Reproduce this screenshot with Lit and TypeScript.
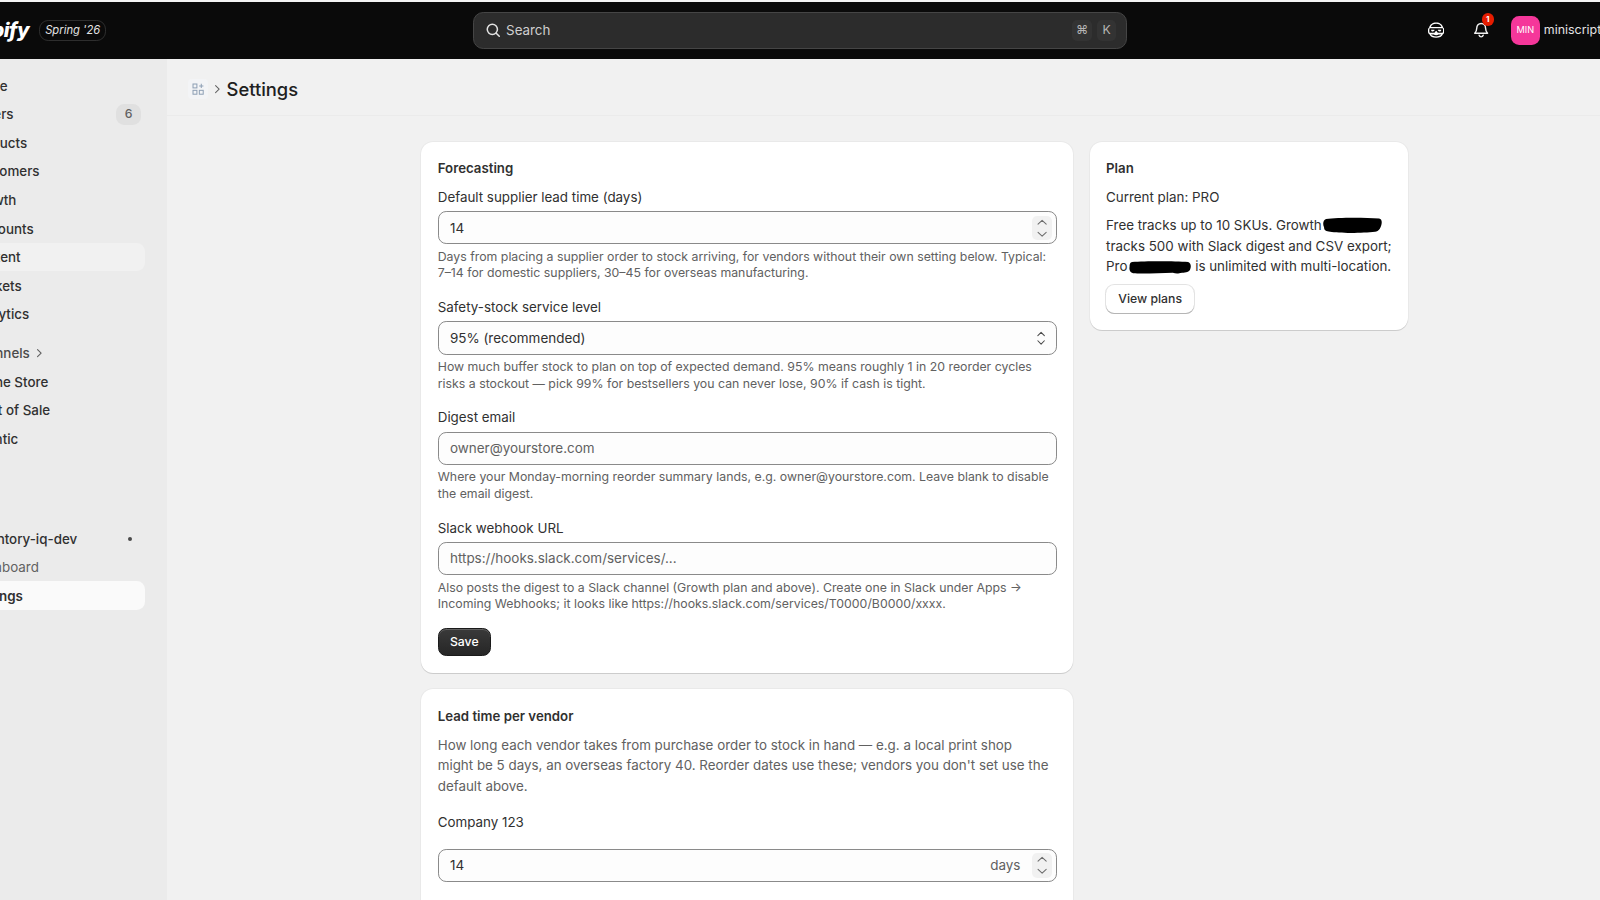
import { LitElement, html, css, svg } from "lit";
import { customElement } from "lit/decorators.js";

const upDown = html`<svg width="10" height="20" viewBox="0 0 10 20" fill="none" stroke="#4a4a4a" stroke-width="1" stroke-linecap="round" stroke-linejoin="round"><path d="M1.800 7.500 5 4.200l3.200 3.300"/><path d="M1.800 12.500 5 15.800l3.200-3.300"/></svg>`;

const spinner = html`<span class="spin">
    <svg width="12" height="22" viewBox="0 0 12 22" fill="none" stroke="#6b6b6b" stroke-width="1" stroke-linecap="round" stroke-linejoin="round"><path d="M2 7 6 3.200 10 7"/><path d="M2 15 6 18.800 10 15"/></svg>
</span>`;

const blob = (w: number, h: number, d: string) => html`<svg class="blob" width=${w} height=${h} viewBox="0 0 ${w} ${h}"><path fill="#000" d=${d}/></svg>`;

const topNav = [
    { label: "Home" },
    { label: "Orders", count: "6" },
    { label: "Products" },
    { label: "Customers" },
    { label: "Growth" },
    { label: "Discounts" },
    { label: "Content", cls: "hover" },
    { label: "Markets" },
    { label: "Analytics" },
];

const channels = ["Online Store", "Point of Sale", "Atlantic"];

@customElement("app-root")
export class AppRoot extends LitElement {
    static styles = css`
        :host {
            display: block;
            width: 1568px;
            height: 882px;
            zoom: 1.0204;
            overflow: hidden;
            background: #f1f1f1;
            color: #303030;
            font-family: Inter, "Liberation Sans", sans-serif;
            font-size: 13.1px;
            line-height: 20px;
        }
        .strip {
            height: 2px;
            background: #f4f4f4;
        }
        .topbar {
            display: grid;
            grid-template-columns: 464px 640px 1fr;
            align-items: center;
            height: 56px;
            background: #0a0a0a;
            color: #e3e3e3;
            overflow: hidden;
        }
        .brand {
            display: flex;
            align-items: center;
            margin-left: -45px;
        }
        .logo {
            color: #fff;
            font-size: 20px;
            font-weight: 800;
            font-style: italic;
            letter-spacing: -0.6px;
            margin-right: 10px;
        }
        .season {
            height: 20px;
            box-sizing: border-box;
            padding: 0 5px;
            line-height: 18px;
            border: 1px solid #2e2e2e;
            border-radius: 9px;
            font-size: 11px;
            font-style: italic;
            white-space: nowrap;
        }
        .search {
            display: flex;
            align-items: center;
            height: 36px;
            box-sizing: border-box;
            padding: 0 9px 0 10px;
            background: #2c2c2c;
            border: 1px solid #454545;
            border-radius: 10px;
            color: #cfcfcf;
        }
        .search svg {
            margin-right: 5px;
        }
        .search .grow {
            flex: 1;
        }
        .kbd {
            display: flex;
            align-items: center;
            justify-content: center;
            width: 19px;
            height: 20px;
            margin-left: 5px;
            background: #333;
            border-radius: 5px;
            font-size: 12px;
            color: #b5b5b5;
        }
        .actions {
            display: flex;
            align-items: center;
            padding-left: 295px;
            white-space: nowrap;
        }
        .bell {
            position: relative;
            display: flex;
            margin-left: 29px;
        }
        .bell b {
            position: absolute;
            top: -9px;
            left: 8px;
            width: 12px;
            height: 12px;
            border-radius: 50%;
            background: #e51c00;
            color: #fff;
            font-size: 8px;
            font-weight: 700;
            line-height: 12px;
            text-align: center;
        }
        .avatar {
            display: flex;
            align-items: center;
            justify-content: center;
            width: 28px;
            height: 28px;
            margin-left: 21px;
            margin-right: 4px;
            border-radius: 8px;
            background: #f5379a;
            color: #fff;
            font-size: 9px;
        }
        .username {
            font-size: 12.2px;
        }
        .layout {
            display: flex;
            height: 824px;
        }
        .sidebar {
            flex: none;
            width: 164px;
            background: #ebebeb;
            overflow: hidden;
        }
        .nav {
            width: 210px;
            margin-left: -68px;
            padding-top: 12px;
        }
        .row {
            display: flex;
            align-items: center;
            height: 28px;
            padding: 0.5px 4px 0 38.5px;
            box-sizing: border-box;
            border-radius: 8px;
            white-space: nowrap;
            font-weight: 500;
        }
        .row.hover {
            background: #f1f1f1;
        }
        .row.active {
            background: #fafafa;
            font-weight: 600;
        }
        .row.muted {
            color: #616161;
            font-weight: 400;
        }
        .row.group {
            color: #4a4a4a;
        }
        .count {
            margin-left: auto;
            width: 24px;
            height: 20px;
            border-radius: 8px;
            background: #e0e0e0;
            color: #616161;
            font-size: 12px;
            line-height: 20px;
            text-align: center;
        }
        .section {
            margin-top: 10px;
        }
        .section .row svg {
            margin-left: 5px;
        }
        .apps {
            margin-top: 70px;
        }
        .dot {
            margin-left: auto;
            width: 4px;
            height: 4px;
            border-radius: 50%;
            background: #4a4a4a;
            margin-right: 9px;
        }
        .page {
            flex: 1;
            min-width: 0;
        }
        .crumbs {
            display: flex;
            align-items: center;
            height: 56px;
            padding: 4px 0 0 20px;
            box-sizing: border-box;
            border-bottom: 1px solid #ebebeb;
        }
        .tile {
            display: flex;
            align-items: center;
            justify-content: center;
            width: 20px;
            height: 20px;
            border-radius: 4px;
            background: #f3f4f6;
        }
        .crumbs .sep {
            margin: 0 4px 0 4px;
        }
        h1 {
            margin: 0;
            font-size: 18px;
            font-weight: 550;
            line-height: 24px;
            color: #202020;
        }
        .content {
            display: grid;
            grid-template-columns: 639px 312px;
            gap: 16px;
            align-items: start;
            padding: 25px 0 0 249px;
        }
        .col {
            display: flex;
            flex-direction: column;
            gap: 16px;
        }
        .card {
            padding: 16px;
            background: #fff;
            border-radius: 12px;
            box-shadow: 0 1px 0 rgba(0, 0, 0, 0.12), 0 0 0 1px rgba(0, 0, 0, 0.03);
        }
        .card.tall {
            padding-top: 16.8px;
            padding-bottom: 48px;
        }
        h2 {
            margin: 0 0 8px;
            font-size: 13px;
            font-weight: 600;
            line-height: 20px;
        }
        .field {
            margin-bottom: 15.1px;
        }
        label {
            display: block;
            margin-bottom: 4px;
        }
        .control {
            display: flex;
            align-items: center;
            height: 32.5px;
            box-sizing: border-box;
            padding: 0 4px 0 11px;
            background: #fdfdfd;
            border: 1px solid #8a8a8a;
            border-radius: 8px;
            font-size: 13.2px;
        }
        .control .value {
            flex: 1;
        }
        .control.hint .value {
            color: #616161;
        }
        .suffix {
            color: #616161;
            margin-right: 11px;
        }
        .spin {
            display: flex;
            align-items: center;
            justify-content: center;
            width: 20px;
            height: 24px;
            border-radius: 5px;
            background: #f1f1f1;
        }
        .updown {
            display: flex;
            margin-right: 6px;
        }
        .help {
            margin: 4px 0 0;
            padding-top: 0.5px;
            font-size: 12.08px;
            line-height: 16px;
            color: #616161;
        }
        .btn {
            display: block;
            width: fit-content;
            height: 28px;
            box-sizing: border-box;
            padding: 0 12px;
            border-radius: 8px;
            font-size: 12px;
            font-weight: 550;
            line-height: 28px;
        }
        .btn.dark {
            margin-top: 1.7px;
            line-height: 26px;
            background: linear-gradient(#3a3a3a, #262626);
            border: 1px solid #1a1a1a;
            padding: 0 11px;
            color: #fff;
            box-shadow: inset 0 1px 0 rgba(255, 255, 255, 0.2);
        }
        .btn.light {
            background: #fff;
            box-shadow: 0 1px 0 #b5b5b5, 0 0 0 1px #e3e3e3;
        }
        .intro {
            max-width: 600px;
            margin: 0 0 16px;
            color: #616161;
        }
        .vendor {
            margin-bottom: 16px;
        }
        .plain {
            margin: 0 0 8px;
        }
        .blob {
            vertical-align: -3px;
            margin-left: -2px;
        }
    `;

    private field(label: string, control: unknown, help: unknown) {
        return html`<div class="field">
            <label>${label}</label>
            ${control}
            <p class="help">${help}</p>
        </div>`;
    }

    private maskIcon() {
        return svg`<svg width="16" height="16" viewBox="0 0 16 16" fill="none">
            <path fill="#fff" d="M8 .5c3.600 0 6.200 2 6.800 4.800.8.500 1.200 1.400 1.200 2.500v1.500c0 1.200-.5 2.200-1.400 2.700C13.800 14.300 11.200 15.500 8 15.500s-5.800-1.200-6.600-3.500C.5 11.500 0 10.500 0 9.300V7.800c0-1.100.4-2 1.200-2.500C1.800 2.500 4.400.5 8 .5Z"/>
            <path fill="#0a0a0a" d="M8 1.800c-2.500 0-4.500 1.200-5.200 3h10.400c-.7-1.800-2.700-3-5.200-3ZM2 6.200c-.5 0-.7.400-.7 1.200v1.800c0 .8.300 1.400.9 1.400h3.300c1 0 1.400-.6 1.800-1.300.3-.5.500-.7.700-.7s.4.200.7.700c.4.700.8 1.300 1.800 1.300h3.300c.6 0 .9-.6.9-1.400V7.400c0-.8-.2-1.200-.7-1.200Zm.9 6.100c.8 1 2.800 1.900 5.100 1.900s4.300-.9 5.100-1.900c-1 .1-2 .1-2.800 0-.5.4-1.300.6-2.300.6s-1.800-.2-2.300-.6c-.8.100-1.800.1-2.800 0Z"/>
            <path fill="#fff" d="M3 7.700h3.200c.2 0 .3.200.2.400-.3.700-.8 1.100-1.600 1.100H4c-.6 0-1-.6-1-1.500Zm10 0H9.800c-.2 0-.3.200-.2.400.3.700.8 1.100 1.600 1.100h.8c.6 0 1-.6 1-1.500Z"/>
        </svg>`;
    }

    render() {
        return html`
            <div class="strip"></div>
            <header class="topbar">
                <div class="brand">
                    <span class="logo">Shopify</span>
                    <span class="season">Spring '26</span>
                </div>
                <div class="search">
                    <svg width="16" height="16" viewBox="0 0 16 16" fill="none" stroke="#e3e3e3" stroke-width="1.500" stroke-linecap="round"><circle cx="7.200" cy="7.200" r="5"/><path d="m11 11 3 3"/></svg>
                    <span class="grow">Search</span>
                    <span class="kbd">⌘</span>
                    <span class="kbd">K</span>
                </div>
                <div class="actions">
                    ${this.maskIcon()}
                    <span class="bell">
                        <svg width="16" height="16" viewBox="0 0 16 16" fill="none" stroke="#f1f1f1" stroke-width="1.400" stroke-linejoin="round" stroke-linecap="round"><path d="M8 1.500c-2.600 0-4.300 2-4.300 4.400 0 2.700-.8 3.800-2 5.100h12.600c-1.200-1.300-2-2.400-2-5.100 0-2.400-1.700-4.400-4.300-4.400Z"/><path d="M6 13c.3 1 1.100 1.600 2 1.600s1.700-.6 2-1.600"/></svg>
                        <b>1</b>
                    </span>
                    <span class="avatar">MIN</span>
                    <span class="username">miniscript</span>
                </div>
            </header>
            <div class="layout">
                <aside class="sidebar">
                    <nav class="nav">
                        ${topNav.map(
                            (n) => html`<div class="row ${n.cls ?? ""}">
                                ${n.label}${n.count ? html`<span class="count">${n.count}</span>` : ""}
                            </div>`
                        )}
                        <div class="section">
                            <div class="row group">
                                Channels
                                <svg width="8" height="10" viewBox="0 0 8 10" fill="none" stroke="#616161" stroke-width="1.100" stroke-linecap="round" stroke-linejoin="round"><path d="m2.500 1.500 3.500 3.500-3.500 3.500"/></svg>
                            </div>
                            ${channels.map((c) => html`<div class="row">${c}</div>`)}
                        </div>
                        <div class="apps">
                            <div class="row">Inventory-iq-dev<span class="dot"></span></div>
                            <div class="row muted">Dashboard</div>
                            <div class="row active">Settings</div>
                        </div>
                    </nav>
                </aside>
                <main class="page">
                    <div class="crumbs">
                        <span class="tile">
                            <svg width="12" height="12" viewBox="0 0 12 12" fill="none" stroke="#8fa0b5" stroke-width="1"><rect x="1" y="1" width="3.800" height="3.800"/><rect x="1" y="7.200" width="3.800" height="3.800"/><rect x="7.200" y="7.200" width="3.800" height="3.800"/><path d="M9.100 .8v4.200M7 2.900h4.200"/></svg>
                        </span>
                        <svg class="sep" width="10" height="12" viewBox="0 0 10 12" fill="none" stroke="#616161" stroke-width="1" stroke-linecap="round" stroke-linejoin="round"><path d="m3.500 2.500 3.500 3.500-3.500 3.500"/></svg>
                        <h1>Settings</h1>
                    </div>
                    <div class="content">
                        <div class="col">
                            <section class="card">
                                <h2>Forecasting</h2>
                                ${this.field(
                                    "Default supplier lead time (days)",
                                    html`<div class="control"><span class="value">14</span>${spinner}</div>`,
                                    "Days from placing a supplier order to stock arriving, for vendors without their own setting below. Typical: 7–14 for domestic suppliers, 30–45 for overseas manufacturing."
                                )}
                                ${this.field(
                                    "Safety-stock service level",
                                    html`<div class="control"><span class="value">95% (recommended)</span><span class="updown">${upDown}</span></div>`,
                                    "How much buffer stock to plan on top of expected demand. 95% means roughly 1 in 20 reorder cycles risks a stockout — pick 99% for bestsellers you can never lose, 90% if cash is tight."
                                )}
                                ${this.field(
                                    "Digest email",
                                    html`<div class="control hint"><span class="value">owner@yourstore.com</span></div>`,
                                    "Where your Monday-morning reorder summary lands, e.g. owner@yourstore.com. Leave blank to disable the email digest."
                                )}
                                ${this.field(
                                    "Slack webhook URL",
                                    html`<div class="control hint"><span class="value">https://hooks.slack.com/services/...</span></div>`,
                                    "Also posts the digest to a Slack channel (Growth plan and above). Create one in Slack under Apps → Incoming Webhooks; it looks like https://hooks.slack.com/services/T0000/B0000/xxxx."
                                )}
                                <span class="btn dark">Save</span>
                            </section>
                            <section class="card tall">
                                <h2>Lead time per vendor</h2>
                                <p class="intro">How long each vendor takes from purchase order to stock in hand — e.g. a local print shop might be 5 days, an overseas factory 40. Reorder dates use these; vendors you don't set use the default above.</p>
                                <div class="vendor">Company 123</div>
                                <div class="control"><span class="value">14</span><span class="suffix">days</span>${spinner}</div>
                            </section>
                        </div>
                        <section class="card">
                            <h2>Plan</h2>
                            <p class="plain">Current plan: PRO</p>
                            <p class="plain">
                                Free tracks up to 10 SKUs. Growth
                                ${blob(58, 16, "M3 2C14 .5 40 .5 55 1.500c3 .5 3 4 2 7-1 3-2 5-6 6-12 1.500-36 1.500-44 0C3 14 1 13 1 10-.5 7 0 3 3 2Z")}
                                tracks 500 with Slack digest and CSV export; Pro
                                ${blob(61, 13, "M3 1C16 0 44 0 58 1c3 1 3 5 2 7-1 3-4 3-8 3.500-4 1-6 1-9 0C30 12 12 12.500 4 12 1 11 0 9 .5 6 .5 3 1 1.500 3 1Z")}
                                is unlimited with multi-location.
                            </p>
                            <span class="btn light">View plans</span>
                        </section>
                    </div>
                </main>
            </div>
        `;
    }
}
